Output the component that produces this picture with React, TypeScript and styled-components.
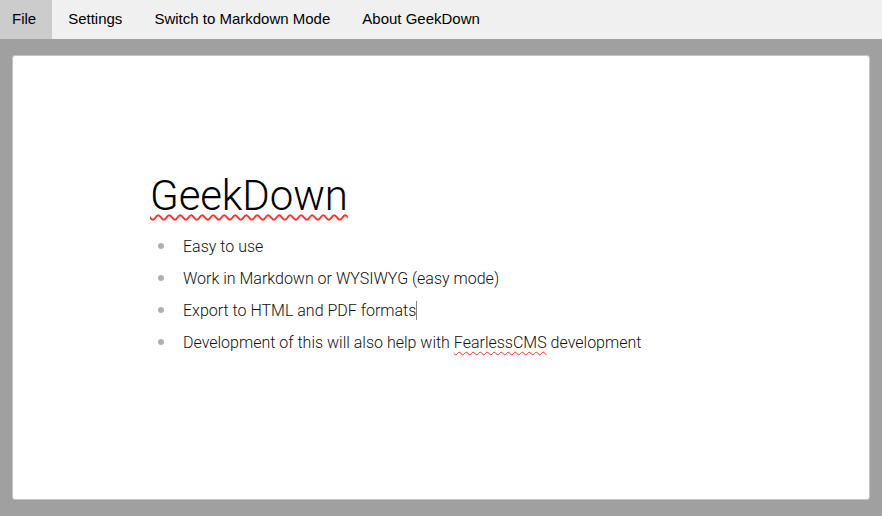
import React from "react";
import styled, { createGlobalStyle } from "styled-components";

const GlobalStyle = createGlobalStyle`
    html, body {
        margin: 0;
        padding: 0;
        height: 100%;
    }
    body {
        background: #a0a0a0;
        font-family: "Liberation Sans", Arial, sans-serif;
    }
    #root {
        height: 100%;
    }
`;

const menuItems = ["File", "Settings", "Switch to Markdown Mode", "About GeekDown"];

const features = [
    "Easy to use",
    "Work in Markdown or WYSIWYG (easy mode)",
    "Export to HTML and PDF formats",
];

export default function App() {
    return (
        <>
            <GlobalStyle />
            <Page>
                <MenuBar>
                    {menuItems.map((item, i) => (
                        <MenuItem key={item} active={i === 0}>
                            {item}
                        </MenuItem>
                    ))}
                </MenuBar>
                <Workspace>
                    <Sheet>
                        <Title>
                            <Misspelled>GeekDown</Misspelled>
                        </Title>
                        <FeatureList>
                            <li>{features[0]}</li>
                            <li>{features[1]}</li>
                            <li>
                                {features[2]}
                                <Caret />
                            </li>
                            <li>
                                Development of this will also help with{" "}
                                <Misspelled small>FearlessCMS</Misspelled>{" "}
                                development
                            </li>
                        </FeatureList>
                    </Sheet>
                </Workspace>
            </Page>
        </>
    );
}

const Page = styled.div`
    display: flex;
    flex-direction: column;
    height: 100%;
`;

const MenuBar = styled.nav`
    display: flex;
    height: 39px;
    background: #f0f0f0;
`;

const MenuItem = styled.div<{ active?: boolean }>`
    display: flex;
    align-items: center;
    padding: 0 16px 3px;
    font-size: 15px;
    color: #000;
    background: ${(p) => (p.active ? "#cccccc" : "transparent")};

    &:first-child {
        padding-left: 12px;
    }
`;

const Workspace = styled.main`
    flex: 1;
    display: flex;
    padding: 16px 12px;
    min-height: 0;
`;

const Sheet = styled.section`
    flex: 1;
    background: #fff;
    border: 1px solid #c4c4c4;
    border-radius: 3px;
    padding: 115px 137px 0;
    font-family: Roboto, "Noto Sans", sans-serif;
    font-weight: 300;
    color: #111;
`;

const Title = styled.h1`
    margin: 0 0 10px;
    font-size: 42px;
    line-height: 50px;
    font-weight: 300;
    color: #000;
    letter-spacing: -0.1px;
`;

const Misspelled = styled.span<{ small?: boolean }>`
    text-decoration: underline wavy #ff3030;
    text-decoration-thickness: ${(p) => (p.small ? "1px" : "1.5px")};
    text-underline-offset: ${(p) => (p.small ? "3px" : "4px")};
    text-decoration-skip-ink: none;
`;

const FeatureList = styled.ul`
    margin: 0;
    padding-left: 8px;
    list-style: none;
    font-size: 16px;
    line-height: 32px;

    li::before {
        content: "";
        display: inline-block;
        width: 6px;
        height: 6px;
        border-radius: 50%;
        background: #b0b0b0;
        margin-right: 19px;
        vertical-align: 3px;
    }
`;

const Caret = styled.span`
    display: inline-block;
    width: 0;
    height: 19px;
    border-left: 1px solid #888;
    vertical-align: -4px;
`;
